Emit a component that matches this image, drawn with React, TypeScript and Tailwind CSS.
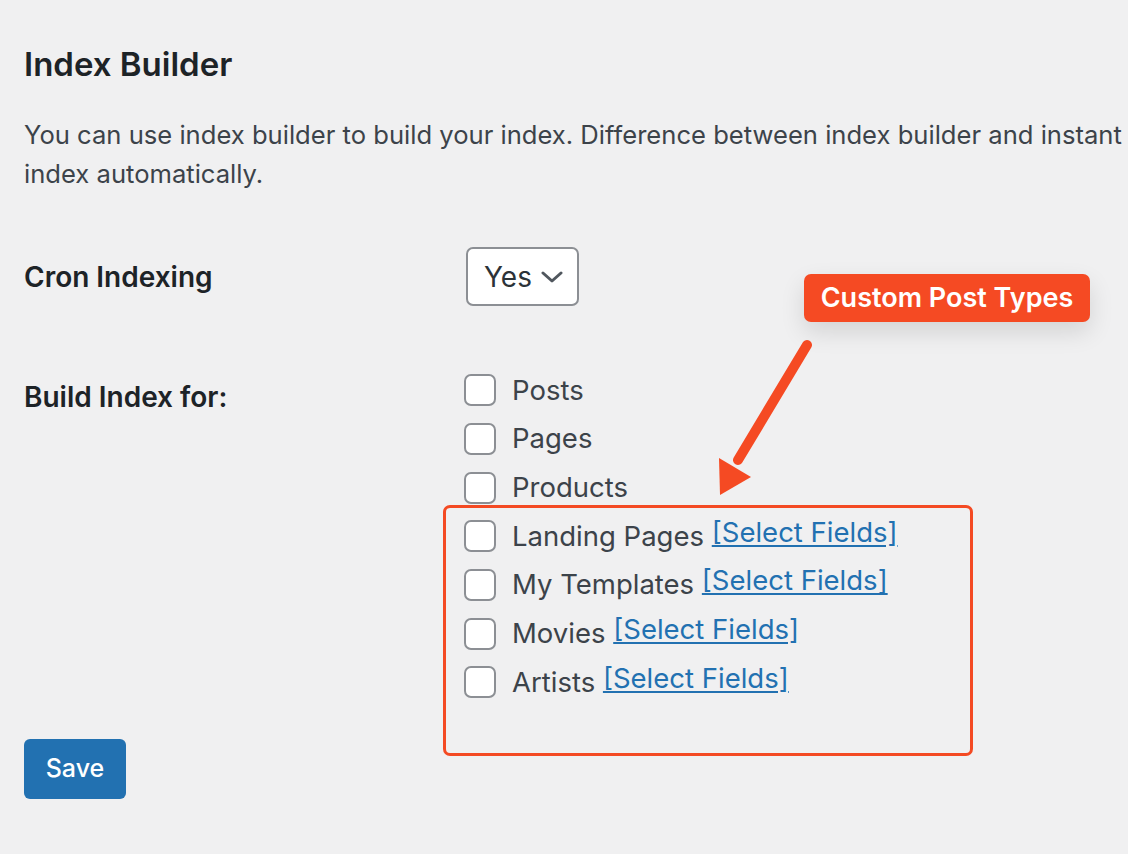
import React from 'react'

const types = [
  { name: 'Posts' },
  { name: 'Pages' },
  { name: 'Products' },
  { name: 'Landing Pages', fields: true },
  { name: 'My Templates', fields: true },
  { name: 'Movies', fields: true },
  { name: 'Artists', fields: true },
]

function Checkbox() {
  return (
    <span className="inline-block h-[32px] w-[32px] shrink-0 rounded-[7px] border-2 border-[#8c8f94] bg-white" />
  )
}

export default function App() {
  return (
    <div
      className="relative h-[854px] w-[1128px] overflow-hidden bg-[#f0f0f1] pl-[24px] text-[#3c434a]"
      style={{ fontFamily: 'Inter, "Noto Sans", sans-serif' }}
    >
      {/* Header */}
      <h2 className="pt-[44px] text-[33px] font-semibold leading-[40px] text-[#1d2327]">Index Builder</h2>
      <p className="mt-[31px] whitespace-nowrap text-[25.6px] leading-[39px]">
        You can use index builder to build your index. Difference between index builder and instant
        crawler is that index builder
        <br />
        index automatically.
      </p>

      {/* Form table */}
      <div className="mt-[54px] flex items-center">
        <div className="w-[442px] text-[28px] font-semibold text-[#1d2327]">Cron Indexing</div>
        <div className="flex h-[59px] w-[113px] items-center justify-between rounded-[7px] border-2 border-[#8c8f94] bg-white pl-[16px] pr-[14px] text-[28px] text-[#2c3338]">
          <span>Yes</span>
          <svg width="22" height="14" viewBox="0 0 22 14" fill="none">
            <path d="M2 3l9 8 9-8" stroke="#50575e" strokeWidth="3" strokeLinecap="round" strokeLinejoin="round" />
          </svg>
        </div>
      </div>

      <div className="mt-[60px] flex">
        <div className="w-[440px] pt-[11px] text-[28px] font-semibold leading-[40px] text-[#1d2327]">
          Build Index for:
        </div>
        <div className="flex flex-col">
          {types.map((t) => (
            <label key={t.name} className="flex h-[48.7px] items-center gap-[16px] text-[27.5px]">
              <Checkbox />
              <span className="whitespace-nowrap">
                {t.name}
                {t.fields && (
                  <>
                    {' '}
                    <a className="relative top-[-4px] text-[27.5px] text-[#2271b1] underline underline-offset-[3px]" href="#">
                      [Select Fields]
                    </a>
                  </>
                )}
              </span>
            </label>
          ))}
        </div>
      </div>

      <button className="mt-[32px] h-[60px] w-[102px] rounded-[6px] bg-[#2271b1] text-[25px] font-medium text-white">
        Save
      </button>

      {/* Annotations */}
      <div className="absolute left-[443px] top-[505px] h-[251px] w-[530px] rounded-[7px] border-[3px] border-[#f44a23]" />
      <div className="absolute left-[804px] top-[274px] flex h-[48px] w-[286px] items-center justify-center rounded-[7px] bg-[#f54a23] text-[27px] font-semibold text-white shadow-[0_10px_24px_rgba(0,0,0,0.12)]">
        Custom Post Types
      </div>
      <svg className="absolute left-[700px] top-[330px]" width="140" height="180" viewBox="0 0 140 180">
        <line x1="107" y1="15" x2="38" y2="130" stroke="#f54a23" strokeWidth="10" strokeLinecap="round" />
        <polygon points="19,128 51,147 20,165" fill="#f54a23" />
      </svg>
    </div>
  )
}
